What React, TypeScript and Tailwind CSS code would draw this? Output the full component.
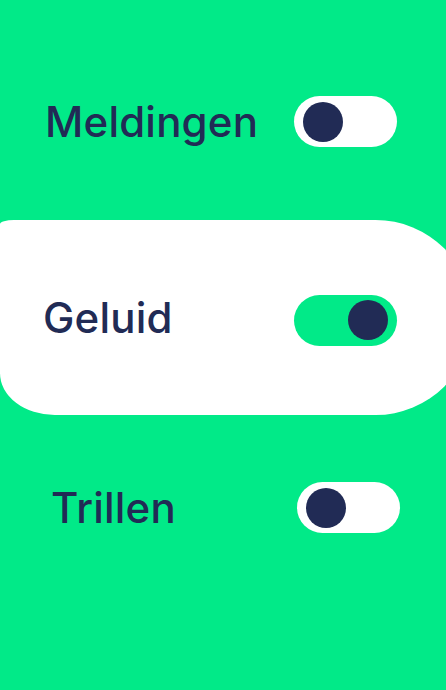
export default function App() {
  return (
    <div className="w-full h-[690px] overflow-hidden bg-[#01ea88] font-['Inter','Liberation_Sans',sans-serif] text-[#212b55]">
      <Row label="Meldingen" on={false} className="pt-[96px] pl-[45px] pr-[49px]" />

      <div className="mt-[73px] mr-[-27px] h-[195px] bg-white rounded-tl-[14px_4px] rounded-bl-[55px_42px] rounded-r-[98px] flex items-center pl-[43px] pr-[76px]">
        <span className="text-[42px] font-medium leading-none tracking-[0.2px]">Geluid</span>
        <Toggle on className="ml-auto mt-[5px]" />
      </div>

      <Row label="Trillen" on={false} className="pt-[67px] pl-[51px] pr-[46px]" />
    </div>
  )
}

function Row({ label, on, className }: { label: string; on: boolean; className: string }) {
  return (
    <div className={"flex items-center " + className}>
      <span className="text-[42px] font-medium leading-none tracking-[0.2px]">{label}</span>
      <Toggle on={on} className="ml-auto" />
    </div>
  )
}

function Toggle({ on, className }: { on: boolean; className?: string }) {
  return (
    <div
      className={
        "w-[103px] h-[51px] rounded-full flex items-center px-[9px] " +
        (on ? "bg-[#01ea88] justify-end" : "bg-white justify-start") +
        (className ? " " + className : "")
      }
    >
      <div className="w-[40px] h-[40px] rounded-full bg-[#212b55]" />
    </div>
  )
}
